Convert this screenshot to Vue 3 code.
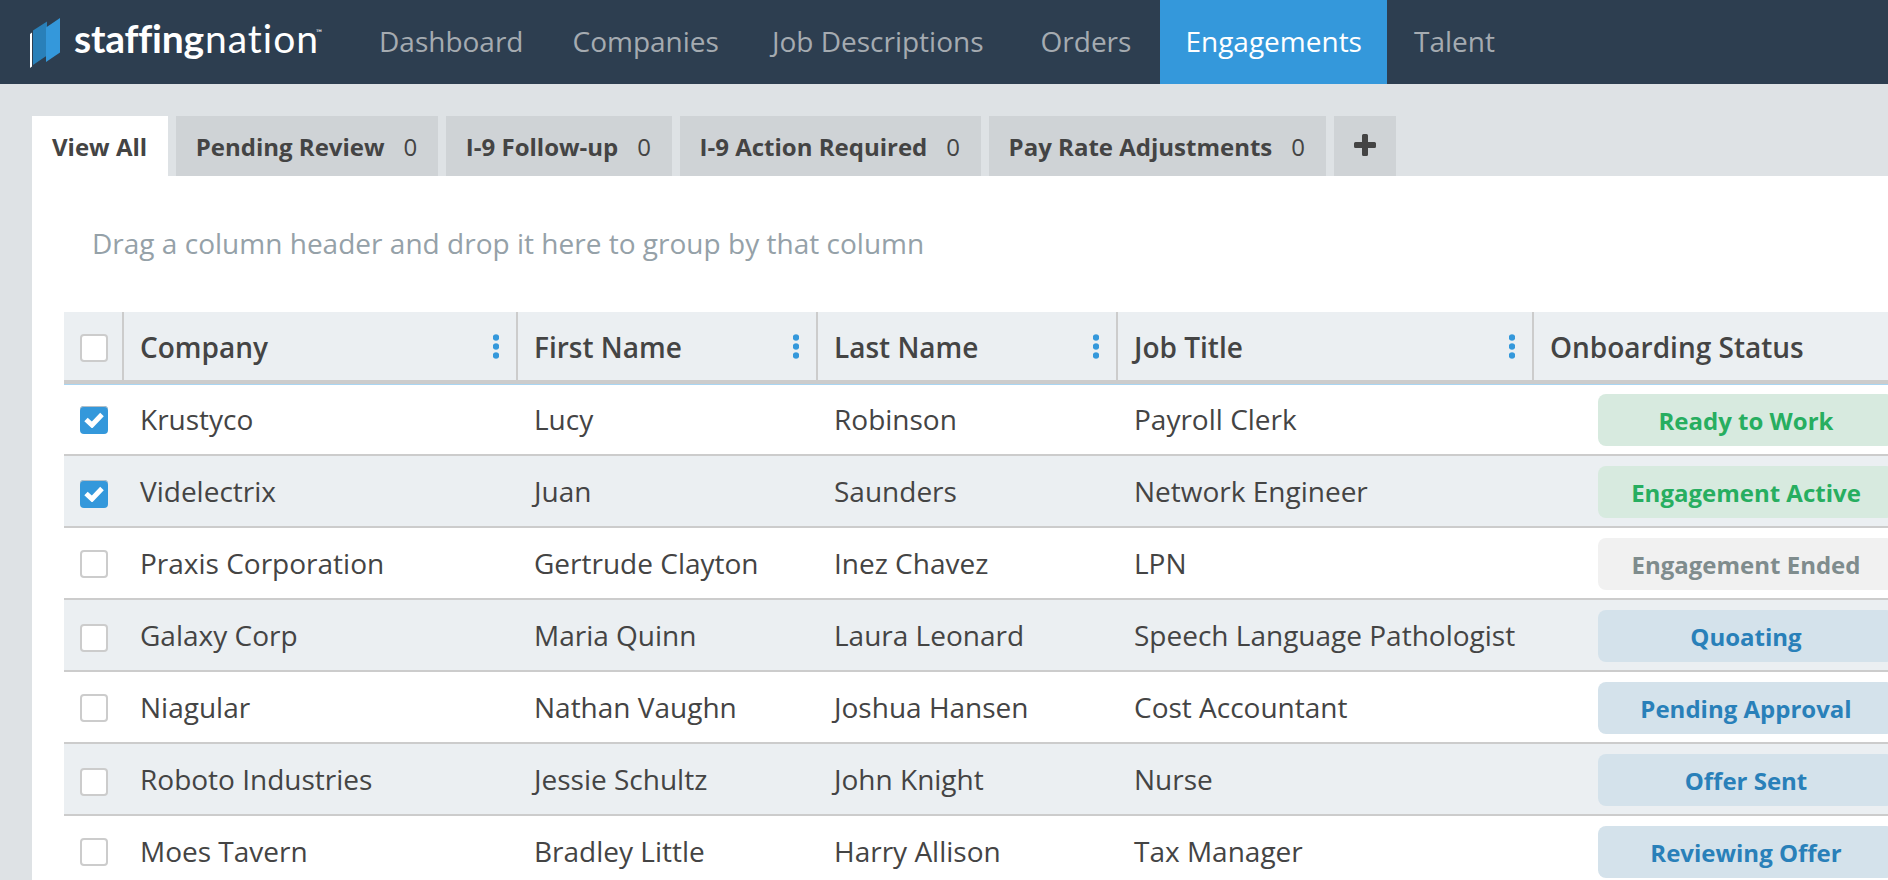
<template>
  <div class="page">
    <header class="navbar">
      <div class="logo">
        <svg width="300" height="68" viewBox="0 0 300 68">
          <path d="M0 26 L2 24.500 V58.500 L0 60 Z" fill="#fff" />
          <path d="M3 22.500 L17 13.500 V47.500 L3 57 Z" fill="#2980b9" />
          <path d="M16 19.500 L30 10 V44.500 L16 54 Z" fill="#3498db" />
          <text class="logo-bold" x="44" y="45" textLength="130">staffing</text>
          <text class="logo-light" x="175" y="45" textLength="113">nation</text>
          <text class="logo-tm" x="286" y="28" textLength="6" lengthAdjust="spacingAndGlyphs">™</text>
        </svg>
      </div>
      <nav class="menu">
        <a v-for="item in menu" :key="item" href="#" :class="['menu-item', { active: item === activeItem }]" @click.prevent="activeItem = item">{{ item }}</a>
      </nav>
    </header>

    <main class="content">
      <div class="tabs">
        <button v-for="tab in tabs" :key="tab.name" :class="['tab', { active: tab.name === activeTab }]" @click="activeTab = tab.name">
          {{ tab.name }}<span v-if="tab.count !== undefined" class="count">{{ tab.count }}</span>
        </button>
        <button class="tab tab-add" aria-label="Add">
          <svg width="22" height="22" viewBox="0 0 22 22">
            <path d="M9.500 0h3a1.500 1.500 0 0 1 1.500 1.500V8h6.500A1.500 1.500 0 0 1 22 9.500v3a1.500 1.500 0 0 1-1.500 1.500H14v6.500a1.500 1.500 0 0 1-1.500 1.500h-3A1.500 1.500 0 0 1 8 20.500V14H1.500A1.500 1.500 0 0 1 0 12.500v-3A1.500 1.500 0 0 1 1.500 8H8V1.500A1.500 1.500 0 0 1 9.500 0z" fill="#444" />
          </svg>
        </button>
      </div>

      <section class="panel">
        <div class="group-hint">Drag a column header and drop it here to group by that column</div>

        <div class="grid">
          <div class="row head">
            <div class="cell check-cell">
              <span :class="['checkbox', { checked: allChecked }]" @click="toggleAll"></span>
            </div>
            <div v-for="col in columns" :key="col" class="cell">
              {{ col }}
              <svg v-if="col !== 'Onboarding Status'" class="dots" width="6" height="26" viewBox="0 0 6 26">
                <circle cx="3" cy="3.500" r="3.200" />
                <circle cx="3" cy="12.500" r="3.200" />
                <circle cx="3" cy="21.500" r="3.200" />
              </svg>
            </div>
          </div>

          <div v-for="row in rows" :key="row.company" class="row">
            <div class="cell check-cell">
              <span :class="['checkbox', { checked: row.checked }]" @click="row.checked = !row.checked">
                <svg v-if="row.checked" width="20" height="16" viewBox="0 0 20 16">
                  <path d="M2 7.500 L8 13 L18 2.500" fill="none" stroke="#fff" stroke-width="5" />
                </svg>
              </span>
            </div>
            <div class="cell">{{ row.company }}</div>
            <div class="cell">{{ row.first }}</div>
            <div class="cell">{{ row.last }}</div>
            <div class="cell">{{ row.title }}</div>
            <div class="cell status-cell">
              <span :class="['badge', row.color]">{{ row.status }}</span>
            </div>
          </div>
        </div>
      </section>
    </main>
  </div>
</template>

<script setup>
import { ref, computed } from 'vue'

const menu = ['Dashboard', 'Companies', 'Job Descriptions', 'Orders', 'Engagements', 'Talent']
const activeItem = ref('Engagements')

const tabs = [
  { name: 'View All' },
  { name: 'Pending Review', count: 0 },
  { name: 'I-9 Follow-up', count: 0 },
  { name: 'I-9 Action Required', count: 0 },
  { name: 'Pay Rate Adjustments', count: 0 }
]
const activeTab = ref('View All')

const columns = ['Company', 'First Name', 'Last Name', 'Job Title', 'Onboarding Status']

const rows = ref([
  { company: 'Krustyco', first: 'Lucy', last: 'Robinson', title: 'Payroll Clerk', status: 'Ready to Work', color: 'green', checked: true },
  { company: 'Videlectrix', first: 'Juan', last: 'Saunders', title: 'Network Engineer', status: 'Engagement Active', color: 'green', checked: true },
  { company: 'Praxis Corporation', first: 'Gertrude Clayton', last: 'Inez Chavez', title: 'LPN', status: 'Engagement Ended', color: 'gray', checked: false },
  { company: 'Galaxy Corp', first: 'Maria Quinn', last: 'Laura Leonard', title: 'Speech Language Pathologist', status: 'Quoating', color: 'blue', checked: false },
  { company: 'Niagular', first: 'Nathan Vaughn', last: 'Joshua Hansen', title: 'Cost Accountant', status: 'Pending Approval', color: 'blue', checked: false },
  { company: 'Roboto Industries', first: 'Jessie Schultz', last: 'John Knight', title: 'Nurse', status: 'Offer Sent', color: 'blue', checked: false },
  { company: 'Moes Tavern', first: 'Bradley Little', last: 'Harry Allison', title: 'Tax Manager', status: 'Reviewing Offer', color: 'blue', checked: false }
])

const allChecked = computed(() => rows.value.every(r => r.checked))

const toggleAll = () => {
  const value = !allChecked.value
  rows.value.forEach(r => { r.checked = value })
}
</script>

<style>
body {
  margin: 0;
  overflow: hidden;
}
</style>

<style scoped>
.page {
  height: 880px;
  overflow: hidden;
  background: #dee2e5;
  font-family: 'Open Sans', 'Noto Sans', sans-serif;
  font-size: 28px;
  color: #444;
}

.navbar {
  display: flex;
  height: 84px;
  background: #2d3e50;
}

.logo {
  width: 324px;
  padding: 8px 0 0 30px;
}

.logo svg {
  display: block;
}

.logo text {
  font-family: Lato, sans-serif;
  font-variant-ligatures: none;
  font-size: 39px;
  fill: #fff;
}

.logo .logo-bold {
  font-weight: 700;
}

.logo .logo-light {
  font-weight: 400;
}

.logo .logo-tm {
  font-size: 9px;
}

.menu {
  display: flex;
}

.menu-item {
  padding: 0 25px;
  line-height: 82px;
  color: #a5abb1;
  text-decoration: none;
  white-space: nowrap;
}

.menu-item:nth-child(2) {
  margin-left: -1px;
}

.menu-item:nth-child(3) {
  margin-left: 3px;
}

.menu-item:nth-child(4) {
  margin-left: 7px;
}

.menu-item:nth-child(5) {
  margin-left: 4px;
}

.menu-item:nth-child(6) {
  margin-left: 2px;
}

.menu-item.active {
  background: #3498db;
  color: #fff;
}

.content {
  padding: 32px 0 0 32px;
}

.tabs {
  display: flex;
  gap: 7.6px;
  height: 60px;
}

.tab {
  display: flex;
  align-items: center;
  border: none;
  padding: 2px 21px 0 20px;
  background: #cfd3d6;
  color: #444;
  font-family: inherit;
  font-size: 24px;
  font-weight: 700;
  line-height: 58px;
  white-space: nowrap;
  cursor: pointer;
}

.tab.active {
  background: #fff;
}

.count {
  margin-left: 19px;
  font-weight: 400;
}

.tab-add {
  padding: 0 20px 2px;
}

.panel {
  height: 704px;
  padding: 0 0 0 32px;
  background: #fff;
}

.group-hint {
  height: 136px;
  padding-left: 28px;
  line-height: 134px;
  letter-spacing: 0.015px;
  color: #95a1a8;
}

.grid {
  width: 1860px;
}

.row {
  display: grid;
  grid-template-columns: 58px 394px 300px 300px 416px 392px;
  height: 70px;
  border-bottom: 2px solid #ccc;
}

.row:nth-child(odd) {
  background: #ebeff2;
}

.row.head {
  height: 68px;
  border-bottom: 4px solid #ccc;
  box-shadow: 0 1px 0 #a9d5f2;
  position: relative;
  font-weight: 600;
}

.cell {
  display: flex;
  align-items: center;
  justify-content: space-between;
  padding: 0 18px;
  white-space: nowrap;
}

.head .cell {
  padding: 2px 17px 0 16px;
  border-left: 2px solid #ccc;
}

.row .check-cell {
  border-left: none;
  padding: 2px 0 0 16px;
  justify-content: flex-start;
}

.row:nth-child(odd) .check-cell {
  padding-top: 6px;
}

.row.head .check-cell {
  padding-top: 4px;
}

.dots {
  fill: #3498db;
}

.checkbox {
  display: flex;
  align-items: center;
  justify-content: center;
  box-sizing: border-box;
  width: 28px;
  height: 28px;
  border: 2px solid #ccc;
  border-radius: 4px;
  background: #fff;
  cursor: pointer;
}

.checkbox.checked {
  border: none;
  background: #3498db;
  box-shadow: inset 0 1px 0 #b5bfc6;
}

.row .status-cell {
  padding: 2px 0 0 66px;
  justify-content: flex-start;
}

.badge {
  width: 296px;
  height: 52px;
  border-radius: 8px;
  font-size: 24px;
  font-weight: 700;
  line-height: 53px;
  text-align: center;
}

.badge.green {
  background: #d7eadf;
  color: #27ae60;
}

.badge.gray {
  background: #f1f1f1;
  color: #7f8c8d;
}

.badge.blue {
  background: #d4e2eb;
  color: #2980b9;
}
</style>
